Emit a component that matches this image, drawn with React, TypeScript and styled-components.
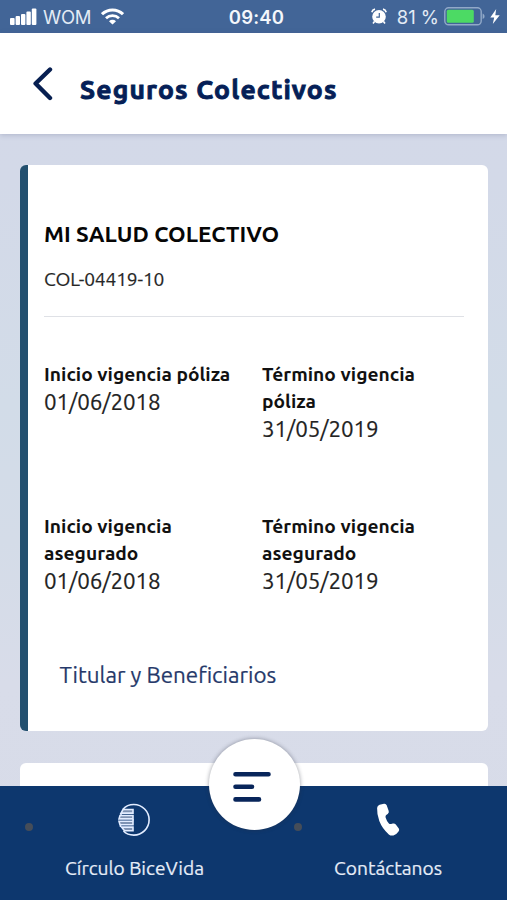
import React from "react";
import styled, { createGlobalStyle } from "styled-components";

const navy = "#08255a";

const GlobalStyle = createGlobalStyle`
  * { box-sizing: border-box; }
  body { margin: 0; background: #d5dae8; }
`;

const Screen = styled.div`
  width: 507px;
  height: 900px;
  display: flex;
  flex-direction: column;
  overflow: hidden;
  font-family: Ubuntu, "Noto Sans", sans-serif;
  background: linear-gradient(180deg, #d3d8e8 0%, #d3d9e8 20%, #d2dce8 45%, #d4dce8 60%, #d8dce9 76%, #d7dbe8 100%);
`;

const StatusBar = styled.div`
  flex: none;
  height: 32.5px;
  display: grid;
  grid-template-columns: 1fr auto 1fr;
  align-items: center;
  padding: 1px 7px 0 10px;
  background: #426597;
  color: #f4f7fb;
  font-family: Inter, sans-serif;
  font-size: 19px;
`;

const StatusGroup = styled.div<{ $end?: boolean }>`
  display: flex;
  align-items: center;
  justify-content: ${(p) => (p.$end ? "flex-end" : "flex-start")};
`;

const Carrier = styled.span`
  margin: 0 10px 0 6px;
  color: #e3ebf5;
  font-size: 18.5px;
  letter-spacing: -0.35px;
`;

const Clock = styled.span`
  padding-left: 3px;
  font-size: 18.5px;
  font-weight: 600;
  letter-spacing: 0.2px;
`;

const Percent = styled.span`
  margin: 0 5px 0 10px;
  color: #e3ebf5;
  font-size: 18.5px;
  letter-spacing: 0.1px;
  word-spacing: -0.5px;
`;

const Header = styled.header`
  flex: none;
  z-index: 1;
  height: 101px;
  display: flex;
  align-items: center;
  gap: 27px;
  padding: 1px 0 0 33px;
  background: #fff;
  box-shadow: 0 1px 5px rgba(70, 80, 120, 0.25);
`;

const BackButton = styled.button`
  display: flex;
  padding: 0;
  border: 0;
  background: none;
`;

const PageTitle = styled.h1`
  margin: 11px 0 0;
  color: #051f57;
  font-size: 26.5px;
  font-weight: 700;
  line-height: 32px;
  letter-spacing: 1.17px;
  white-space: nowrap;
  -webkit-text-stroke: 0.9px #051f57;
`;

const Content = styled.main`
  flex: 1;
  min-height: 0;
  display: flex;
  flex-direction: column;
  gap: 31.5px;
  padding: 31.5px 19px 0 20px;
  overflow: hidden;
`;

const Card = styled.section<{ $accent?: boolean }>`
  flex: none;
  height: 566px;
  padding: 54.5px 24px 0 ${(p) => (p.$accent ? "16px" : "24px")};
  border-left: ${(p) => (p.$accent ? "8px solid #23506f" : "0")};
  border-radius: 6px;
  background: #fff;
`;

const PlanName = styled.h2`
  margin: 0;
  color: #060606;
  font-size: 22.4px;
  font-weight: 700;
  line-height: 28px;
  letter-spacing: 0.03px;
  white-space: nowrap;
`;

const PlanCode = styled.p`
  margin: 19px 0 25px;
  color: #262626;
  font-size: 19.2px;
  line-height: 24px;
  letter-spacing: -0.15px;
  -webkit-text-stroke: 0.2px currentColor;
`;

const Divider = styled.hr`
  height: 1px;
  margin: 0;
  border: 0;
  background: #dfe1e6;
`;

const Dates = styled.dl`
  display: grid;
  grid-template-columns: 218px 1fr;
  row-gap: 71px;
  margin: 44.5px 0 67px;
`;

const DateLabel = styled.dt`
  color: #111;
  font-size: 19.2px;
  font-weight: 700;
  line-height: 27px;
  letter-spacing: 0.02px;
  white-space: pre-line;
`;

const DateValue = styled.dd`
  margin: 0;
  color: #222;
  font-size: 22.4px;
  line-height: 27px;
  letter-spacing: -0.1px;
  -webkit-text-stroke: 0.2px currentColor;
`;

const Link = styled.a`
  display: block;
  margin-left: 15.5px;
  color: #26396a;
  font-size: 22.4px;
  line-height: 28px;
  white-space: nowrap;
  -webkit-text-stroke: 0.2px currentColor;
`;

const Footer = styled.nav`
  position: relative;
  flex: none;
  z-index: 1;
  height: 114px;
  display: grid;
  grid-template-columns: 269px 1fr;
  background: #0d376e;
`;

const Tab = styled.div`
  display: flex;
  align-items: center;
  justify-content: space-between;
`;

const TabBody = styled.div`
  flex: 1;
  height: 100%;
  display: flex;
  flex-direction: column;
  align-items: center;
  padding-top: 17px;
`;

const TabLabel = styled.span`
  margin-top: 18px;
  color: #e6edf8;
  font-size: 19.2px;
  line-height: 26px;
  white-space: nowrap;
  -webkit-text-stroke: 0.2px currentColor;
`;

const Bullet = styled.i`
  width: 8px;
  height: 8px;
  margin: -32px -33px 0 25px;
  border-radius: 50%;
  background: #454d59;
`;

const MenuButton = styled.button`
  position: absolute;
  top: -47.5px;
  left: 208.5px;
  width: 91px;
  height: 91px;
  display: grid;
  place-items: center;
  padding: 5px 4px 0 0;
  border: 0;
  border-radius: 50%;
  background: #fff;
  box-shadow: 0 0 4px rgba(40, 45, 60, 0.45);
`;

const periods = [
  { label: "Inicio vigencia póliza", value: "01/06/2018" },
  { label: "Término vigencia\npóliza", value: "31/05/2019" },
  { label: "Inicio vigencia\nasegurado", value: "01/06/2018" },
  { label: "Término vigencia\nasegurado", value: "31/05/2019" },
];

const SignalIcon = () => (
  <svg width="27" height="17" viewBox="0 0 27 17" fill="#fff">
    <rect x="0" y="10" width="4.6" height="7" rx="1" />
    <rect x="5.6" y="8" width="4.4" height="9" rx="1" />
    <rect x="11" y="6" width="4.4" height="11" rx="1" />
    <rect x="16.4" y="3.5" width="4.4" height="13.5" rx="1" />
    <rect x="21.8" y="0.5" width="4.6" height="16.5" rx="1" />
  </svg>
);

const WifiIcon = () => (
  <svg width="23" height="17" viewBox="0 0 23 17" fill="none" stroke="#fff">
    <path d="M1 6.2a15.2 15.2 0 0 1 21 0" strokeWidth="3" />
    <path d="M5 10.3a9.4 9.4 0 0 1 13 0" strokeWidth="2.8" />
    <path d="M11.5 16.6 8 13.2a5 5 0 0 1 7 0z" fill="#fff" stroke="none" />
  </svg>
);

const AlarmIcon = () => (
  <svg width="16" height="17" viewBox="0 0 16 17" fill="none">
    <circle cx="8" cy="8.8" r="6.8" fill="#fff" />
    <path d="m3.5 13.5-1.5 2M12.5 13.5l1.5 2" stroke="#fff" strokeWidth="1.6" />
    <path d="M.8 4.2C1.2 2.6 2.3 1.5 4 1.1M15.2 4.2C14.8 2.6 13.7 1.5 12 1.1" stroke="#fff" strokeWidth="1.7" />
    <path d="M8.3 5v4.1H5.2" stroke="#426597" strokeWidth="1.2" />
  </svg>
);

const BatteryIcon = () => (
  <svg width="46" height="19" viewBox="0 0 46 19">
    <rect x="0.8" y="0.8" width="36.4" height="17" rx="3.8" fill="none" stroke="#91a9c8" strokeWidth="1.4" />
    <rect x="2.8" y="2.8" width="27" height="13" rx="1.5" fill="#4cda64" />
    <path d="M38.6 6.5c2.6 1 2.6 4.6 0 5.6z" fill="#91a9c8" />
  </svg>
);

const BoltIcon = () => (
  <svg width="10" height="15" viewBox="0 0 10 15" fill="#fff">
    <path d="M6.2 0 .3 8.5h3.9L2.8 15 9.7 6.2H5.3z" />
  </svg>
);

const BackIcon = () => (
  <svg width="20" height="34" viewBox="0 0 20 34" fill="none">
    <path d="M17 2.5 2.6 16.5 17 31" stroke="#071f51" strokeWidth="4.4" strokeLinecap="round" strokeLinejoin="round" />
  </svg>
);

const MenuIcon = () => (
  <svg width="40" height="32" viewBox="0 0 40 32" fill="none" stroke={navy} strokeWidth="4.6" strokeLinecap="round">
    <path d="M3.5 3.2h33M3.5 15.8h16.5M3.5 28.4h23.5" />
  </svg>
);

const CircleIcon = () => (
  <svg width="36" height="34" viewBox="0 0 36 34" fill="none" stroke="#e2ecff" strokeWidth="1.6">
    <path d="M6 6.2C8.5 3.3 12.2 1.5 16.8 1.5a15.3 15.3 0 1 1 0 30.6C13 32.1 9 30.7 6.5 28" />
    <path d="M6 6.5h10v3.6H4zM3 12.5h13v3.4H2zM2 18.3h14v3.4H3zM4.5 24.1H16v3.6H7.5z" fill="#7f93b3" />
    <path d="M4 10v2.500M16 15.900v2.400M3.500 21.700v2.400" />
  </svg>
);

const PhoneIcon = () => (
  <svg width="24" height="34" viewBox="0 0 24 34" fill="#fff">
    <path d="M3.6 1.8 8 .8q2-.3 2.7 1.500l2 5.700q.6 1.800-1 2.900l-1.500 1.200q-1 .9-.6 2.300 1 3.500 3.300 6 .9.900 2.200.6l1.800-.5q1.800-.4 2.900 1l3 4q1 1.500-.3 2.900-2 3-5.100 4-2.400.7-4.600-1Q6.300 25.900 3.300 18.100.8 11 1.100 5.100q.2-2.600 2.500-3.300z" />
  </svg>
);

export default function App() {
  return (
    <>
      <GlobalStyle />
      <Screen>
        <StatusBar>
          <StatusGroup>
            <SignalIcon />
            <Carrier>WOM</Carrier>
            <WifiIcon />
          </StatusGroup>
          <Clock>09:40</Clock>
          <StatusGroup $end>
            <AlarmIcon />
            <Percent>81 %</Percent>
            <BatteryIcon />
            <BoltIcon />
          </StatusGroup>
        </StatusBar>
        <Header>
          <BackButton aria-label="Volver">
            <BackIcon />
          </BackButton>
          <PageTitle>Seguros Colectivos</PageTitle>
        </Header>
        <Content>
          <Card $accent>
            <PlanName>MI SALUD COLECTIVO</PlanName>
            <PlanCode>COL-04419-10</PlanCode>
            <Divider />
            <Dates>
              {periods.map((p) => (
                <div key={p.label}>
                  <DateLabel>{p.label}</DateLabel>
                  <DateValue>{p.value}</DateValue>
                </div>
              ))}
            </Dates>
            <Link>Titular y Beneficiarios</Link>
          </Card>
          <Card />
        </Content>
        <Footer>
          <Tab>
            <Bullet />
            <TabBody>
              <CircleIcon />
              <TabLabel>Círculo BiceVida</TabLabel>
            </TabBody>
          </Tab>
          <Tab>
            <Bullet />
            <TabBody>
              <PhoneIcon />
              <TabLabel>Contáctanos</TabLabel>
            </TabBody>
          </Tab>
          <MenuButton aria-label="Menú">
            <MenuIcon />
          </MenuButton>
        </Footer>
      </Screen>
    </>
  );
}
